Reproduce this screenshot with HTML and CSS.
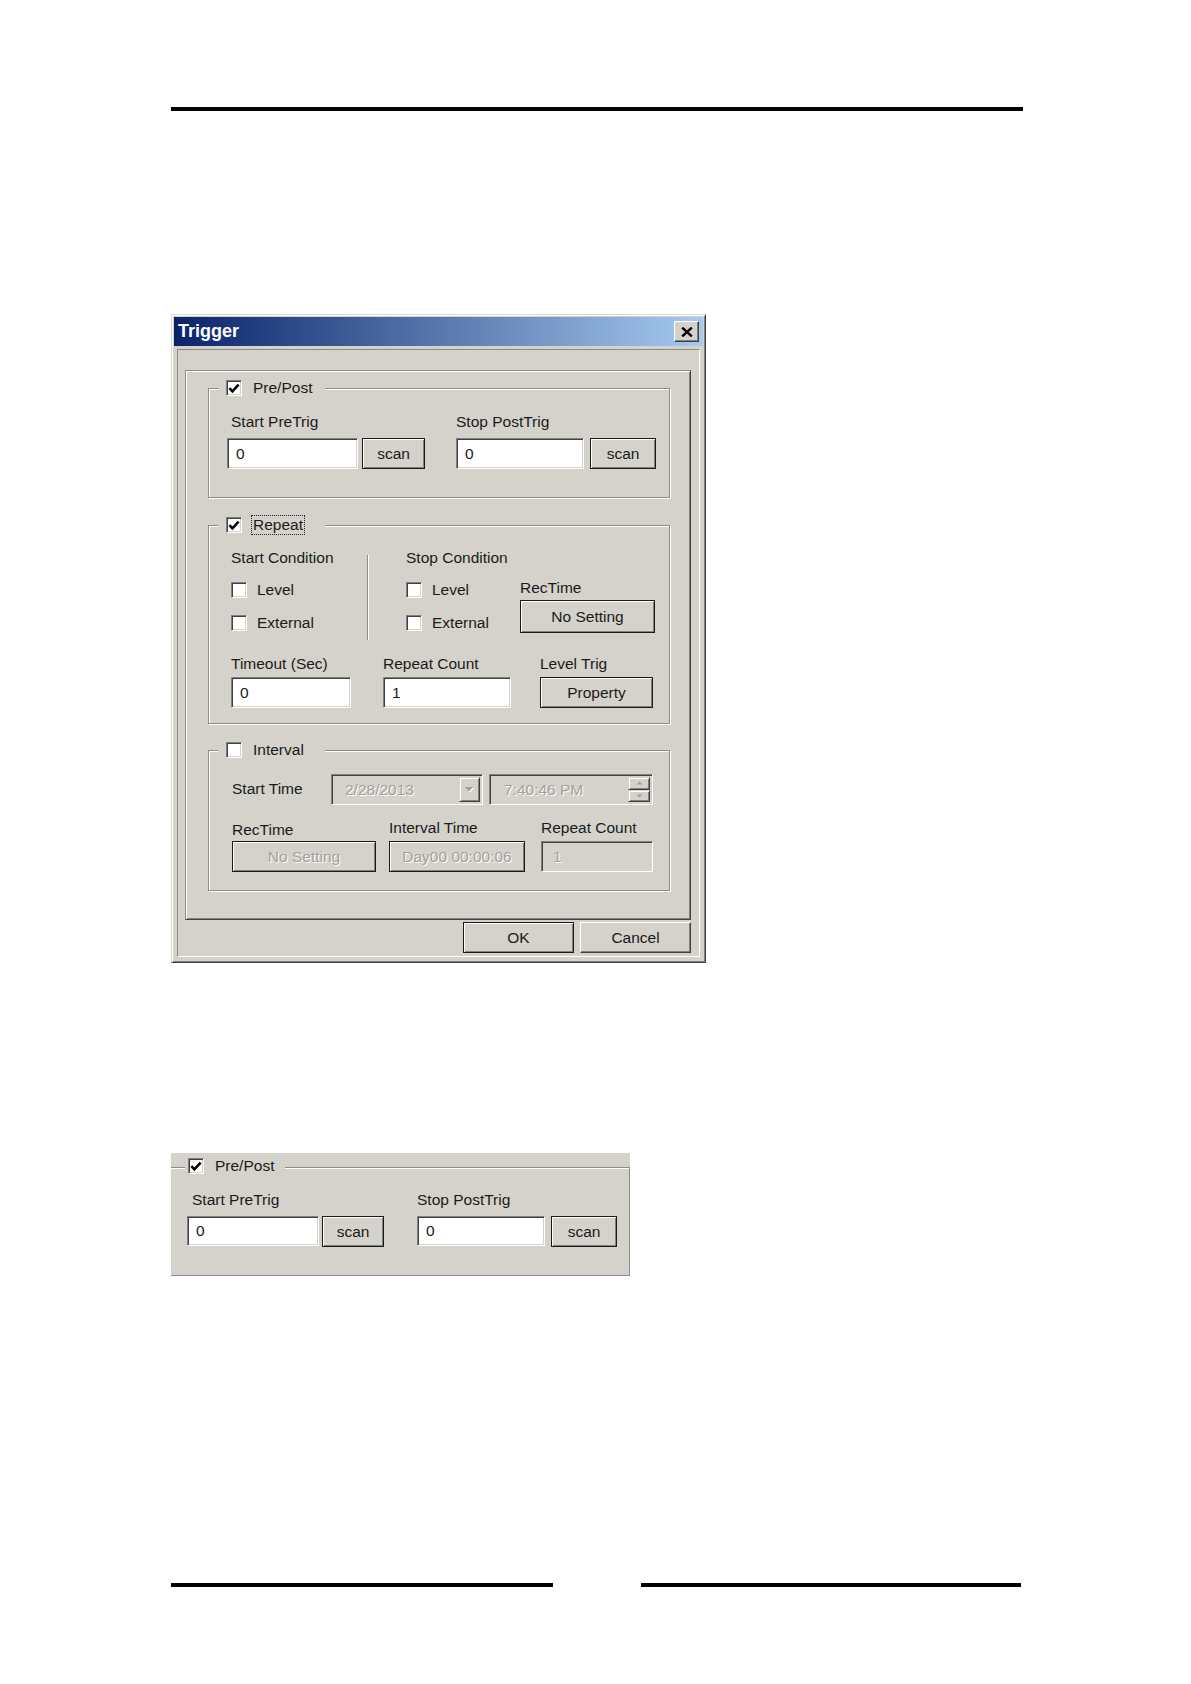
FILE: index.html
```html
<!DOCTYPE html>
<html>
<head>
<meta charset="utf-8">
<title>Trigger</title>
<link rel="stylesheet" href="styles.css">
</head>
<body>
<div class="page">
  <div class="rule-top"></div>

  <div class="dialog">
    <div class="titlebar">
      <span class="title">Trigger</span>
      <span class="close"><svg width="12" height="10" viewBox="0 0 12 10"><path d="M1.2 0.6 L10.8 9.4 M10.8 0.6 L1.2 9.4" stroke="#000" stroke-width="2.4" fill="none"/></svg></span>
    </div>
    <div class="client">
      <div class="frame">
        <div class="group g-prepost">
          <div class="legend">
            <span class="cb"><svg width="12" height="11" viewBox="0 0 12 11"><path d="M1.4 5.2 L4.4 8.4 L10.6 1.6" stroke="#000" stroke-width="2.6" fill="none"/></svg></span>
            <span class="lt">Pre/Post</span>
          </div>
          <div class="pp">
            <div class="pp-col c1">
              <div class="lbl">Start PreTrig</div>
              <div class="ctl"><div class="edit e131">0</div><div class="btn b63">scan</div></div>
            </div>
            <div class="pp-col c2">
              <div class="lbl">Stop PostTrig</div>
              <div class="ctl"><div class="edit e128">0</div><div class="btn b66">scan</div></div>
            </div>
          </div>
        </div>

        <div class="group g-repeat">
          <div class="legend">
            <span class="cb"><svg width="12" height="11" viewBox="0 0 12 11"><path d="M1.4 5.2 L4.4 8.4 L10.6 1.6" stroke="#000" stroke-width="2.6" fill="none"/></svg></span>
            <span class="lt focus">Repeat</span>
          </div>
          <div class="conds">
            <div class="col-start">
              <div class="lbl">Start Condition</div>
              <div class="cbrow r1"><span class="cb"></span><span class="ct">Level</span></div>
              <div class="cbrow r2"><span class="cb"></span><span class="ct">External</span></div>
            </div>
            <div class="vsep"></div>
            <div class="col-stop">
              <div class="lbl">Stop Condition</div>
              <div class="cbrow r1"><span class="cb"></span><span class="ct">Level</span></div>
              <div class="cbrow r2"><span class="cb"></span><span class="ct">External</span></div>
            </div>
            <div class="col-rec">
              <div class="lbl">RecTime</div>
              <div class="btn b135">No Setting</div>
            </div>
          </div>
          <div class="row2">
            <div class="r2c c152">
              <div class="lbl">Timeout (Sec)</div>
              <div class="edit e120">0</div>
            </div>
            <div class="r2c c157">
              <div class="lbl">Repeat Count</div>
              <div class="edit e128">1</div>
            </div>
            <div class="r2c">
              <div class="lbl">Level Trig</div>
              <div class="btn b113">Property</div>
            </div>
          </div>
        </div>

        <div class="group g-interval">
          <div class="legend">
            <span class="cb"></span>
            <span class="lt">Interval</span>
          </div>
          <div class="irow1">
            <div class="st-lbl">Start Time</div>
            <div class="combo">
              <span class="dis">2/28/2013</span>
              <span class="dd"><svg width="11" height="7" viewBox="0 0 11 7"><path d="M2 2 L10 2 L6 6.5 Z" fill="#fff"/><path d="M1 1 L9 1 L5 5.5 Z" fill="#a19e97"/></svg></span>
            </div>
            <div class="timef">
              <span class="dis">7:40:46 PM</span>
              <span class="spin">
                <span class="sp"><svg width="7" height="4" viewBox="0 0 7 4"><path d="M0.5 3.5 L6.5 3.5 L3.5 0.5 Z" fill="#a19e97"/></svg></span>
                <span class="sp"><svg width="7" height="4" viewBox="0 0 7 4"><path d="M0.5 0.5 L6.5 0.5 L3.5 3.5 Z" fill="#a19e97"/></svg></span>
              </span>
            </div>
          </div>
          <div class="irow2">
            <div class="r2c c158">
              <div class="lbl lower">RecTime</div>
              <div class="btn b144 dis">No Setting</div>
            </div>
            <div class="r2c c152">
              <div class="lbl">Interval Time</div>
              <div class="btn b136 dis">Day00 00:00:06</div>
            </div>
            <div class="r2c">
              <div class="lbl">Repeat Count</div>
              <div class="edit e112 disabled"><span class="dis">1</span></div>
            </div>
          </div>
        </div>
      </div>
      <div class="actions">
        <div class="btn b111">OK</div>
        <div class="btn3d b111">Cancel</div>
      </div>
    </div>
  </div>

  <div class="panel2">
    <div class="group g-crop">
      <div class="legend">
        <span class="cb"><svg width="12" height="11" viewBox="0 0 12 11"><path d="M1.4 5.2 L4.4 8.4 L10.6 1.6" stroke="#000" stroke-width="2.6" fill="none"/></svg></span>
        <span class="lt">Pre/Post</span>
      </div>
      <div class="pp">
        <div class="pp-col c1">
          <div class="lbl">Start PreTrig</div>
          <div class="ctl"><div class="edit e132">0</div><div class="btn b62">scan</div></div>
        </div>
        <div class="pp-col c2">
          <div class="lbl">Stop PostTrig</div>
          <div class="ctl"><div class="edit e128">0</div><div class="btn b66">scan</div></div>
        </div>
      </div>
    </div>
  </div>

  <div class="footer">
    <div class="rule-bot left"></div>
    <div class="rule-bot right"></div>
  </div>
</div>
</body>
</html>
```

FILE: styles.css
```css
* { box-sizing: border-box; }
html, body { margin: 0; padding: 0; background: #fff; }
body {
  font-family: "Liberation Sans", Arial, sans-serif;
  font-size: 15.5px;
  color: #1a1a1a;
}
.page {
  width: 1191px;
  height: 1684px;
  padding: 107px 0 0 171px;
  overflow: hidden;
}
.rule-top { width: 852px; height: 4px; background: #000; }

/* dialog window */
.dialog {
  margin-top: 203px;
  width: 535px;
  height: 649px;
  background: #d5d2cb;
  border: 1px solid;
  border-color: #dcd9d3 #404040 #404040 #dcd9d3;
  box-shadow: inset 1px 1px #fff, inset -1px -1px #808080;
  padding: 2px;
  display: flex;
  flex-direction: column;
}
.titlebar {
  flex: none;
  height: 29px;
  background: linear-gradient(90deg, #0a246a 0%, #a6caf0 100%);
  display: flex;
  align-items: center;
  justify-content: space-between;
  padding: 0 4px 0 4px;
}
.title { color: #fff; font-weight: bold; font-size: 18px; }
.close {
  width: 25px;
  height: 21px;
  background: #d5d2cb;
  border: 1px solid;
  border-color: #fff #404040 #404040 #fff;
  box-shadow: inset -1px -1px #808080;
  display: flex;
  align-items: center;
  justify-content: center;
}
.client {
  flex: 1;
  margin: 3px;
  border: 1px solid;
  border-color: #8a8a8a #fff #fff #8a8a8a;
  padding: 20px 8px 0 7px;
}
.frame {
  height: 550px;
  border: 1px solid;
  border-color: #8a8a8a #404040 #404040 #8a8a8a;
  box-shadow: inset 1px 1px #fff, inset -1px -1px #808080;
  padding: 17px 0 0 22px;
}

/* group boxes */
.group {
  position: relative;
  width: 462px;
  border: 1px solid #8c8c8c;
  box-shadow: inset 1px 1px #fff, 1px 1px #fff;
}
.g-prepost { height: 110px; }
.g-repeat { height: 199px; margin-top: 27px; }
.g-interval { height: 141px; margin-top: 26px; }
.legend {
  position: absolute;
  top: -11px;
  left: 9px;
  width: 107px;
  height: 20px;
  padding-left: 8px;
  background: #d5d2cb;
  display: flex;
  align-items: center;
}
.lt { margin-left: 11px; line-height: 18px; }
.lt.focus { outline: 1px dotted #222; outline-offset: 0; margin-left: 10px; padding: 0 1px; }

.cb {
  flex: none;
  width: 16px;
  height: 16px;
  background: #fff;
  border: 1px solid;
  border-color: #808080 #fff #fff #808080;
  box-shadow: inset 1px 1px #404040, inset -1px -1px #d5d2cb;
  display: flex;
  align-items: center;
  justify-content: center;
}

.lbl { height: 18px; line-height: 18px; white-space: nowrap; }

/* controls */
.edit {
  height: 31px;
  background: #fff;
  border: 1px solid;
  border-color: #808080 #fff #fff #808080;
  box-shadow: inset 1px 1px #404040, inset -1px -1px #d5d2cb;
  padding-left: 8px;
  display: flex;
  align-items: center;
}
.edit.disabled { background: #d5d2cb; padding-left: 11px; }
.btn {
  height: 31px;
  background: #d5d2cb;
  border: 1px solid #1a1a1a;
  box-shadow: inset 1px 1px #fff, inset -1px -1px #808080;
  display: flex;
  align-items: center;
  justify-content: center;
  white-space: nowrap;
}
.btn3d {
  height: 31px;
  background: #d5d2cb;
  border: 1px solid;
  border-color: #fff #404040 #404040 #fff;
  box-shadow: inset -1px -1px #808080;
  display: flex;
  align-items: center;
  justify-content: center;
}
.dis { color: #a3a09a; text-shadow: 1px 1px 0 #fff; }

.e112 { width: 112px; }
.e120 { width: 120px; }
.e128 { width: 128px; }
.e131 { width: 131px; }
.e132 { width: 132px; }
.b62 { width: 62px; }
.b63 { width: 63px; }
.b66 { width: 66px; }
.b111 { width: 111px; }
.b113 { width: 113px; }
.b135 { width: 135px; height: 33px; }
.b136 { width: 136px; }
.b144 { width: 144px; }

/* pre/post */
.pp { display: flex; padding: 24px 0 0 18px; }
.pp-col .lbl { margin-bottom: 7px; }
.pp-col.c1 .lbl { padding-left: 4px; }
.pp-col.c2 { margin-left: 31px; }
.ctl { display: flex; }
.e131 + .btn { margin-left: 4px; }
.e128 + .btn { margin-left: 6px; }

/* repeat */
.conds { display: flex; height: 129px; padding: 23px 0 0 22px; }
.col-start { width: 136px; }
.vsep {
  width: 2px;
  height: 85px;
  margin-top: 6px;
  border-left: 1px solid #8c8c8c;
  border-right: 1px solid #fff;
}
.col-stop { margin-left: 37px; width: 114px; }
.col-rec { width: 135px; }
.col-rec .lbl { margin-top: 30px; margin-bottom: 3px; }
.cbrow { display: flex; align-items: center; height: 18px; }
.cbrow.r1 { margin-top: 14px; }
.cbrow.r2 { margin-top: 15px; }
.ct { margin-left: 10px; }
.row2 { display: flex; padding-left: 22px; }
.r2c .lbl { margin-bottom: 4px; }
.c152 { width: 152px; }
.c157 { width: 157px; }

/* interval */
.irow1 { display: flex; align-items: center; padding: 23px 0 0 23px; }
.st-lbl { width: 99px; padding-bottom: 1px; }
.combo, .timef {
  height: 31px;
  background: #d5d2cb;
  border: 1px solid;
  border-color: #808080 #fff #fff #808080;
  box-shadow: inset 1px 1px #404040, inset -1px -1px #d5d2cb;
  display: flex;
  align-items: center;
  padding: 0 2px 0 13px;
}
.combo { width: 152px; }
.timef { width: 164px; margin-left: 6px; padding-left: 14px; }
.dd {
  margin-left: auto;
  width: 21px;
  height: 25px;
  border: 1px solid;
  border-color: #d5d2cb #404040 #404040 #d5d2cb;
  box-shadow: inset 1px 1px #fff, inset -1px -1px #808080;
  display: flex;
  align-items: center;
  justify-content: center;
}
.spin {
  margin-left: auto;
  width: 22px;
  height: 25px;
  display: flex;
  flex-direction: column;
}
.sp {
  flex: 1;
  border: 1px solid;
  border-color: #d5d2cb #404040 #404040 #d5d2cb;
  box-shadow: inset 1px 1px #fff, inset -1px -1px #808080;
  display: flex;
  align-items: center;
  justify-content: center;
}
.irow2 { display: flex; padding-left: 23px; margin-top: 14px; }
.irow2 .lbl { margin-bottom: 4px; }
.irow2 .lbl.lower { padding-top: 2px; height: 20px; margin-bottom: 2px; }
.c158 { width: 157px; }
.irow2 .c152 { width: 152px; }

/* buttons row */
.actions {
  display: flex;
  justify-content: flex-end;
  gap: 6px;
  margin-top: 2px;
}

/* second (cropped) panel */
.panel2 {
  margin-top: 190px;
  width: 459px;
  height: 123px;
  background: #d5d2cb;
  padding-top: 14px;
  overflow: hidden;
}
.g-crop {
  margin-left: -2px;
  width: 461px;
  height: 109px;
}
.g-crop .legend { left: 15px; width: 100px; padding-left: 3px; top: -12px; }
.g-crop .pp { padding: 23px 0 0 17px; }
.g-crop .pp-col.c1 .lbl { padding-left: 5px; }
.g-crop .pp-col.c2 { margin-left: 33px; }
.g-crop .edit { height: 30px; }
.e132 + .btn { margin-left: 3px; }

.footer { display: flex; gap: 88px; margin-top: 307px; }
.rule-bot { height: 4px; background: #000; }
.rule-bot.left { width: 382px; }
.rule-bot.right { width: 380px; }
```
